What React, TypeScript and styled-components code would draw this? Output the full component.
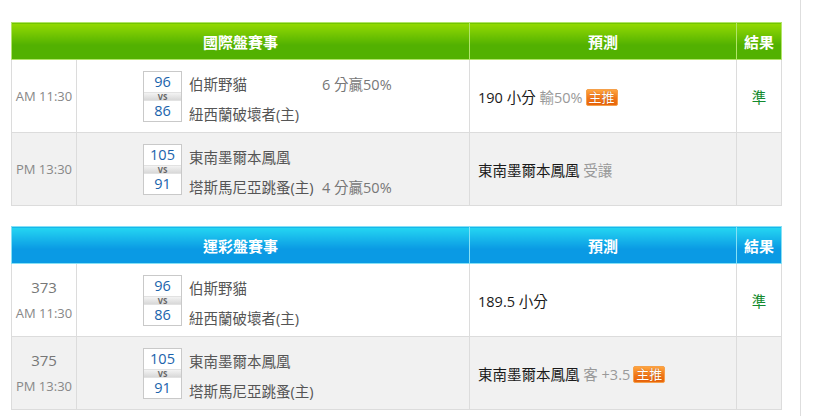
import React from "react";
import styled, { createGlobalStyle } from "styled-components";

const GlobalStyle = createGlobalStyle`
  body {
    margin: 0;
    background: #fff;
    font-family: "Open Sans", "Noto Sans CJK TC", sans-serif;
  }
`;

const themes = {
  green: {
    top: "#94da02",
    bottom: "#52b101",
    line: "#b2e46a",
  },
  blue: {
    top: "#25d6f2",
    bottom: "#0a9ae4",
    line: "#86e0f5",
  },
};

type Tone = keyof typeof themes;

const Page = styled.div`
  box-sizing: border-box;
  width: 801px;
  height: 416px;
  padding: 22px 19px 0 11px;
  border-right: 1px solid #dedede;
  display: flex;
  flex-direction: column;
  gap: 20px;
`;

const Table = styled.table`
  width: 770px;
  border-collapse: collapse;
  table-layout: fixed;
`;

const Head = styled.th<{ $tone: Tone }>`
  height: 36px;
  padding: 0;
  color: #fff;
  font-size: 15px;
  font-weight: bold;
  text-align: center;
  background: linear-gradient(
    ${(p) => themes[p.$tone].top},
    ${(p) => themes[p.$tone].bottom} 60%
  );
  border: 1px solid ${(p) => themes[p.$tone].line};
`;

const Row = styled.tr<{ $alt?: boolean }>`
  background: ${(p) => (p.$alt ? "#f1f1f1" : "#fff")};
`;

const Cell = styled.td`
  height: 72px;
  padding: 0;
  border: 1px solid #dcdcdc;
  vertical-align: middle;
`;

const TimeCell = styled(Cell)`
  text-align: center;
  color: #888;
  font-size: 13px;
  line-height: 26px;
`;

const GameNo = styled.div`
  font-size: 15px;
  color: #777;
`;

const Match = styled.div`
  display: grid;
  grid-template-columns: 39px 140px auto;
  grid-template-rows: 21px 9px 21px;
  padding-left: 66px;
  font-size: 14.5px;
  color: #555;
`;

const ScoreBox = styled.div`
  grid-column: 1;
  grid-row: 1 / 4;
  display: flex;
  flex-direction: column;
  border: 1px solid #c9c9c9;
  background: #fff;
`;

const Score = styled.div`
  height: 20px;
  line-height: 20px;
  text-align: center;
  color: #1a63ac;
  font-size: 14.5px;
`;

const Vs = styled.div`
  height: 9px;
  line-height: 9px;
  text-align: center;
  font-size: 8px;
  font-weight: bold;
  color: #666;
  background: linear-gradient(#f7f7f7, #d4d4d4);
  box-shadow: inset 0 1px 0 #e2e2e2, inset 0 -1px 0 #e2e2e2;
`;

const Team = styled.div<{ $row: number }>`
  grid-row: ${(p) => p.$row};
  grid-column: 2;
  padding-left: 7px;
  display: flex;
  align-items: center;
  white-space: nowrap;
  position: relative;
  top: 2px;
`;

const Spread = styled(Team)`
  grid-column: 3;
  padding-left: 0;
  color: #777;
`;

const PickCell = styled(Cell)`
  padding-left: 8px;
  font-size: 14.5px;
  color: #1a1a1a;
  white-space: nowrap;
`;

const Soft = styled.span`
  color: #999;
`;

const Badge = styled.span`
  display: inline-block;
  margin-left: 3px;
  padding: 0 2px;
  height: 15px;
  line-height: 15px;
  font-size: 13px;
  color: #fff;
  text-shadow: 0 0 1px #a04000;
  vertical-align: 1px;
  border: 1px solid #f5a04a;
  border-radius: 2px;
  background: linear-gradient(#ffa43e, #f07618 55%, #e9650c);
`;

const ResultCell = styled(Cell)`
  text-align: center;
  color: #138a2e;
  font-size: 14.5px;
`;

type Game = {
  no?: string;
  time: string;
  home: [string, string];
  away: [string, string];
  spread?: { text: string; row: 1 | 3 };
  pick: string;
  note?: string;
  hot?: boolean;
  result?: string;
};

const international: Game[] = [
  {
    time: "AM 11:30",
    home: ["96", "伯斯野貓"],
    away: ["86", "紐西蘭破壞者(主)"],
    spread: { text: "6 分贏50%", row: 1 },
    pick: "190 小分",
    note: "輸50%",
    hot: true,
    result: "準",
  },
  {
    time: "PM 13:30",
    home: ["105", "東南墨爾本鳳凰"],
    away: ["91", "塔斯馬尼亞跳蚤(主)"],
    spread: { text: "4 分贏50%", row: 3 },
    pick: "東南墨爾本鳳凰",
    note: "受讓",
  },
];

const lottery: Game[] = [
  {
    no: "373",
    time: "AM 11:30",
    home: ["96", "伯斯野貓"],
    away: ["86", "紐西蘭破壞者(主)"],
    pick: "189.5 小分",
    result: "準",
  },
  {
    no: "375",
    time: "PM 13:30",
    home: ["105", "東南墨爾本鳳凰"],
    away: ["91", "塔斯馬尼亞跳蚤(主)"],
    pick: "東南墨爾本鳳凰",
    note: "客 +3.5",
    hot: true,
  },
];

function GameTable({ title, tone, games }: { title: string; tone: Tone; games: Game[] }) {
  return (
    <Table>
      <colgroup>
        <col style={{ width: 65 }} />
        <col style={{ width: 393 }} />
        <col style={{ width: 267 }} />
        <col style={{ width: 45 }} />
      </colgroup>
      <thead>
        <tr>
          <Head $tone={tone} colSpan={2}>
            {title}
          </Head>
          <Head $tone={tone}>預測</Head>
          <Head $tone={tone}>結果</Head>
        </tr>
      </thead>
      <tbody>
        {games.map((g, i) => (
          <Row key={i} $alt={i % 2 === 1}>
            <TimeCell>
              {g.no && <GameNo>{g.no}</GameNo>}
              {g.time}
            </TimeCell>
            <Cell>
              <Match>
                <ScoreBox>
                  <Score>{g.home[0]}</Score>
                  <Vs>VS</Vs>
                  <Score>{g.away[0]}</Score>
                </ScoreBox>
                <Team $row={1}>{g.home[1]}</Team>
                <Team $row={3}>{g.away[1]}</Team>
                {g.spread && <Spread $row={g.spread.row}>{g.spread.text}</Spread>}
              </Match>
            </Cell>
            <PickCell>
              {g.pick}
              {g.note && <Soft> {g.note}</Soft>}
              {g.hot && <Badge>主推</Badge>}
            </PickCell>
            <ResultCell>{g.result}</ResultCell>
          </Row>
        ))}
      </tbody>
    </Table>
  );
}

export default function App() {
  return (
    <>
      <GlobalStyle />
      <Page>
        <GameTable title="國際盤賽事" tone="green" games={international} />
        <GameTable title="運彩盤賽事" tone="blue" games={lottery} />
      </Page>
    </>
  );
}
